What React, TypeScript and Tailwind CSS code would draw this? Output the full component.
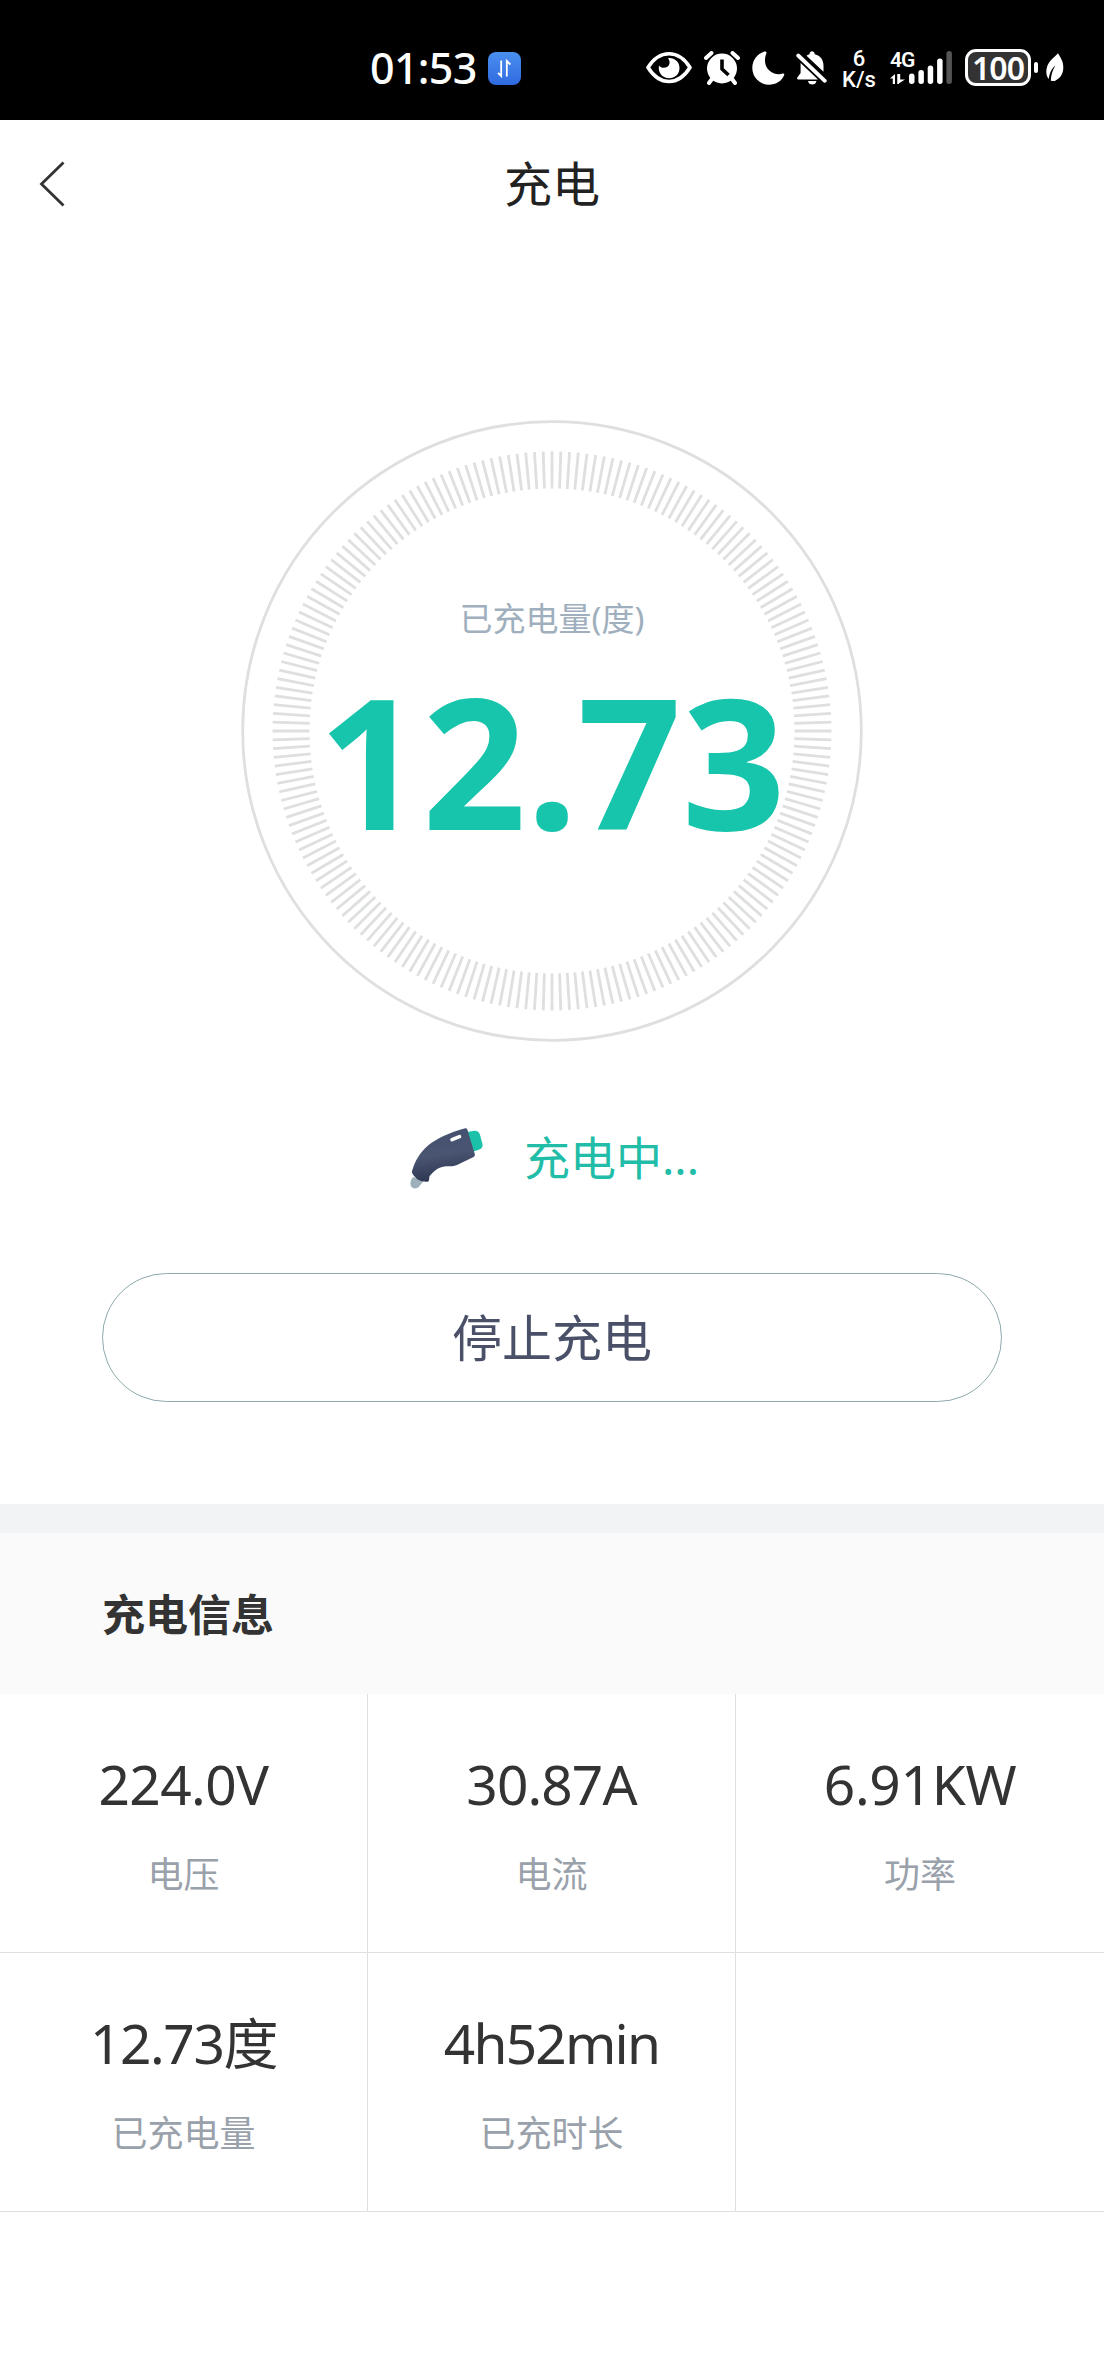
const stats = [
  { value: "224.0V", label: "电压", tracking: "tracking-[-0.6px]" },
  { value: "30.87A", label: "电流", tracking: "tracking-[-0.9px]" },
  { value: "6.91KW", label: "功率", tracking: "tracking-[-0.3px]" },
  { value: "12.73度", label: "已充电量", tracking: "tracking-[-1.4px]" },
  { value: "4h52min", label: "已充时长", tracking: "tracking-[-1.8px]" },
  { value: "", label: "", tracking: "" },
];

const TICKS = 200;

function StatusBar() {
  return (
    <div className="flex h-[120px] items-start bg-black pt-[45px] pl-[370px] text-white">
      <span className="h-[46px] w-[118px] text-[43px] leading-[46px] font-medium tracking-[-0.7px] whitespace-nowrap">
        01:53
      </span>
      <svg className="mt-[7px] h-[33px] w-[33px] shrink-0" viewBox="0 0 33 33">
        <defs>
          <linearGradient id="app" x1="0" y1="0" x2="0" y2="1">
            <stop offset="0" stopColor="#4b8ff0" />
            <stop offset="1" stopColor="#2f6ae0" />
          </linearGradient>
        </defs>
        <rect width="33" height="33" rx="8" fill="url(#app)" />
        <path d="M13.2 8.5v15.5l-3.2-3.2M18.8 24.5V9l3.6 3.5" fill="none" stroke="#fff" strokeWidth="1.8" />
      </svg>
      {/* eye comfort */}
      <svg className="mt-[6px] ml-[125px] h-[34px] w-[46px] shrink-0" viewBox="0 0 46 34">
        <path d="M2 16.5C8 7 15 2.8 23 2.8S38 7 44 16.5C38 26 31 30.5 23 30.5S8 26 2 16.5Z" fill="none" stroke="#fff" strokeWidth="3.6" strokeLinejoin="round" />
        <path d="M13 14.5c2.5 3.6 9.5 3 10.5-2 .4-2.4-.5-4-1.5-5.5C29 6.5 33.5 11 33.5 17S29 27.3 23 27.3 11.5 22 13 14.5Z" fill="#fff" />
      </svg>
      {/* alarm */}
      <svg className="mt-[6px] ml-[12px] h-[34px] w-[36px] shrink-0" viewBox="0 0 36 34">
        <circle cx="18" cy="17.5" r="15" fill="#fff" />
        <path d="M2 7 7.5 2M34 7 28.5 2M8 28 5 32M28 28l3 4" stroke="#fff" strokeWidth="4" strokeLinecap="round" />
        <path d="M18 8.5v9.5l6.500 6" fill="none" stroke="#000" strokeWidth="3.6" />
      </svg>
      {/* do not disturb */}
      <svg className="mt-[6px] ml-[12px] h-[34px] w-[33px] shrink-0" viewBox="0 0 33 34">
        <path d="M12.5.6C5.5 2.5.3 9 .3 17A16.600 16.600 0 0 0 17 33.7c7 0 13-4 15.2-9.8.4-1-.3-1.7-1.4-1.3C22 25 13.5 19 13 10.5c-.1-3.5.4-5.7 1.4-8.2.5-1.2-.5-2-1.9-1.7Z" fill="#fff" />
      </svg>
      {/* muted */}
      <svg className="mt-[6px] ml-[11px] h-[34px] w-[32px] shrink-0" viewBox="0 0 32 34">
        <path d="M2.5 28.5c-1.5 0-1.8-1.4-1-2.3L4.6 22V12L22 28.500ZM10.5 4.8c1-.8 2-1.3 3-1.6C13.7 1 14.8.3 16 .3S18.5 1 18.8 3.2C24.5 4.6 27.5 9 27.5 14.5v6.2ZM12 30h8.5c-.5 2.3-2 3.6-4.2 3.6S12.5 32.3 12 30Z" fill="#fff" />
        <path d="M2.2 4.5 28.8 29.8" stroke="#fff" strokeWidth="3.8" strokeLinecap="round" />
      </svg>
      <div className="mt-[3px] ml-[13px] flex w-[36px] shrink-0 flex-col items-center font-['Roboto',sans-serif] text-[22px] leading-[21px] font-medium">
        <span>6</span>
        <span className="whitespace-nowrap">K/s</span>
      </div>
      <div className="mt-[3px] ml-[13px] w-[19px] shrink-0">
        <span className="block w-[27px] font-['Roboto',sans-serif] text-[21px] leading-[24px] font-semibold tracking-[-1px]">4G</span>
        <svg className="mt-[2px] h-[10px] w-[15px]" viewBox="0 0 15 10">
          <path d="M0 4.500 5 0v10H2.800V4.500ZM8 0h2.200v5.500H15L8 10Z" fill="#fff" />
          <path d="M8 0v10" stroke="#fff" strokeWidth="1.5" />
        </svg>
      </div>
      <svg className="mt-[6px] h-[34px] w-[45px] shrink-0" viewBox="0 0 45 34" fill="#fff">
        <rect y="22.500" width="5.500" height="10.500" rx="2.700" />
        <rect x="9.400" y="19" width="5.500" height="14" rx="2.700" />
        <rect x="18.700" y="14.500" width="5.500" height="18.500" rx="2.700" />
        <rect x="28.100" y="7.500" width="5.500" height="25.500" rx="2.700" />
        <rect x="37.400" width="5.500" height="33" rx="2.700" fill="#555" />
      </svg>
      <div className="mt-[4px] ml-[11px] flex h-[37px] w-[66px] shrink-0 items-center justify-center rounded-[11px] border-[3px] border-white bg-[#333] text-[32px] leading-[31px] font-semibold tracking-[-1px]">
        100
      </div>
      <span className="mt-[17px] ml-[3px] h-[11px] w-[4px] shrink-0 rounded-full bg-white" />
      <svg className="mt-[8px] ml-[8px] h-[29px] w-[18px] shrink-0" viewBox="0 0 18 29">
        <path d="M12 .3C8 5 .4 9 .3 18.5c0 3 .8 5.5 2.5 7.5.5-5 2.700-10.500 6.500-13.500C7 16.500 5 21.500 4.800 27.500c1.500.8 3 .7 4.500.2C14.500 25 17.500 20.500 17.300 14c-.1-6-3-9.500-5.300-13.700Z" fill="#fff" />
      </svg>
    </div>
  );
}

function Gauge() {
  return (
    <div className="relative h-[624px] w-[624px]">
      <svg className="absolute inset-0" viewBox="-312 -312 624 624">
        <circle r="309.3" fill="none" stroke="#dde0df" strokeWidth="2.8" />
        {Array.from({ length: TICKS }, (_, i) => (
          <line key={i} y1="-279.5" y2="-242.5" stroke="#dde0df" strokeWidth="2.8" transform={`rotate(${(i * 360) / TICKS})`} />
        ))}
      </svg>
      <div className="relative flex flex-col items-center pt-[176px]">
        <span className="text-[33px] leading-[48px] text-[#9fafbe]">已充电量(度)</span>
        <span className="mt-[16px] text-[182px] leading-[200px] font-bold text-[#16c5ab]">12.73</span>
      </div>
    </div>
  );
}

function ChargerIcon() {
  return (
    <svg className="mt-[3px] h-[62px] w-[74px] shrink-0" viewBox="0 0 74 62">
      <defs>
        <linearGradient id="gun" x1="0.3" y1="0" x2="0.5" y2="1">
          <stop offset="0" stopColor="#43506f" />
          <stop offset="0.5" stopColor="#4a5572" />
          <stop offset="1" stopColor="#2b334d" />
        </linearGradient>
      </defs>
      <path d="M3 49c-2.5 3-3 6-2.3 8.5 1 3 5.3 4 8 1.5L14 52.5Z" fill="#9fb0bd" />
      <path d="m57 4 7-1.3c3-.3 5 1 5.8 3.5L72.5 16c.5 2.5-.5 4.5-3 5.6L62 24Z" fill="#1bc2a9" />
      <path d="M54.5.5c1.5-.5 2.5.3 3 1.5l7.3 24c.3 1.3-.2 2.3-1.3 3L47 37c-3 1.3-6 1.5-9 1.2-7-.5-13 3-18.5 10L19 52c-.3 1.5-1 2-2.5 1.8-6.5 0-11-3-14-8-.8-1.4-.7-2.5 0-4C5 33 10 24.5 17.5 18 27 10 40 4.5 54.5.5Z" fill="url(#gun)" />
      <path d="m42 11.7 7.5-3" stroke="#fff" strokeWidth="3.6" strokeLinecap="round" />
    </svg>
  );
}

export default function App() {
  return (
    <div className="min-h-[2376px] w-[1104px] bg-white font-['Noto_Sans','Noto_Sans_CJK_SC',sans-serif] text-[#333]">
      <StatusBar />
      <header className="grid h-[128px] grid-cols-3 items-center px-[39px]">
        <svg className="h-[46px] w-[26px]" viewBox="0 0 26 46">
          <path d="M24.5 1.5 2.5 23l22 21.5" fill="none" stroke="#333" strokeWidth="2.8" />
        </svg>
        <h1 className="text-center text-[48px] leading-[64px] text-[#222]">充电</h1>
      </header>

      <main className="flex flex-col items-center pt-[171px]">
        <Gauge />
        <div className="mt-[71px] flex h-[86px] w-[284px] items-center gap-[40px]">
          <ChargerIcon />
          <span className="text-[46px] leading-[64px] whitespace-nowrap text-[#22bda8]">充电中...</span>
        </div>
        <button className="mt-[73px] h-[129px] w-[900px] rounded-[65px] border border-[#8fa9ad] text-[50px] leading-[64px] text-[#4a5068]">
          停止充电
        </button>
      </main>

      <section className="mt-[102px] border-t-[29px] border-[#f2f3f5]">
        <h2 className="flex h-[161px] items-center bg-[#fafafa] pt-[2px] pl-[102px] text-[43px] leading-[60px] font-bold">
          充电信息
        </h2>
        <div className="grid grid-cols-[368px_368px_368px]">
          {stats.map((stat, i) => (
            <div
              key={i}
              className="flex h-[259px] flex-col items-center border-r border-b border-[#dfdfdf] pt-[52px] nth-[3n]:border-r-0"
            >
              <span className={`h-[76px] text-[55px] leading-[76px] ${stat.tracking}`}>{stat.value}</span>
              <span className="mt-[28px] text-[36px] leading-[50px] text-[#99a1ab]">{stat.label}</span>
            </div>
          ))}
        </div>
      </section>
    </div>
  );
}
